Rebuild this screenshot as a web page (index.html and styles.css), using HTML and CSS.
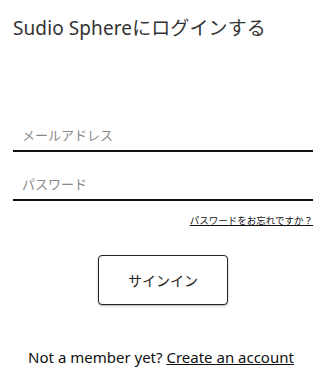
FILE: index.html
```html
<!DOCTYPE html>
<html lang="ja">
<head>
<meta charset="utf-8">
<link rel="stylesheet" href="styles.css">
</head>
<body>
<main class="page">
  <h1 class="title">Sudio Sphereにログインする</h1>
  <form class="form">
    <div class="field"><input class="input" type="email" placeholder="メールアドレス"></div>
    <div class="field"><input class="input" type="password" placeholder="パスワード"></div>
    <div class="forgot-row"><a class="forgot" href="#">パスワードをお忘れですか？</a></div>
    <div class="btn-row"><button class="btn" type="button">サインイン</button></div>
  </form>
  <p class="footer">Not a member yet? <a class="create" href="#">Create an account</a></p>
</main>
</body>
</html>
```
FILE: styles.css
```css
html, body { margin: 0; padding: 0; background: #fff; }
.page {
  padding: 0 21px 0 13px;
  font-family: "Noto Sans", "Noto Sans CJK JP", sans-serif;
  color: #222;
}
.title {
  margin: 0;
  padding-top: 14px;
  font-family: "Noto Sans", "Noto Sans CJK JP", sans-serif;
  font-weight: 400;
  font-size: 19px;
  line-height: 28px;
  color: #333;
  letter-spacing: 0.1px;
}
.form { margin-top: 72px; display: flex; flex-direction: column; }
.field { border-bottom: 2px solid #111; height: 36px; display: flex; align-items: center; margin-bottom: 11px; }
.input {
  border: none; outline: none; width: 100%; padding: 4px 9px 0;
  font-family: "Noto Sans CJK JP", sans-serif; font-size: 13px; background: transparent;
}
.input::placeholder { color: #888; }
.forgot-row { display: flex; justify-content: flex-end; margin-top: 1px; }
.forgot { font-family: "Noto Sans CJK JP", sans-serif; font-size: 9.5px; color: #111; text-decoration: underline; line-height: 14px; }
.btn-row { display: flex; justify-content: center; margin-top: 28px; }
.btn {
  width: 130px; height: 50px; background: #fff; border: 1px solid #222; border-radius: 4px;
  font-family: "Noto Sans CJK JP", sans-serif; font-size: 14px; color: #222;
  box-shadow: 0 1px 2px rgba(0,0,0,0.3);
}
.footer {
  margin: 42px 0 0; text-align: center; font-size: 15px; color: #111;
  font-family: "Noto Sans", sans-serif; padding-right: 4px;
}
.create { color: #111; text-decoration: underline; }
```
